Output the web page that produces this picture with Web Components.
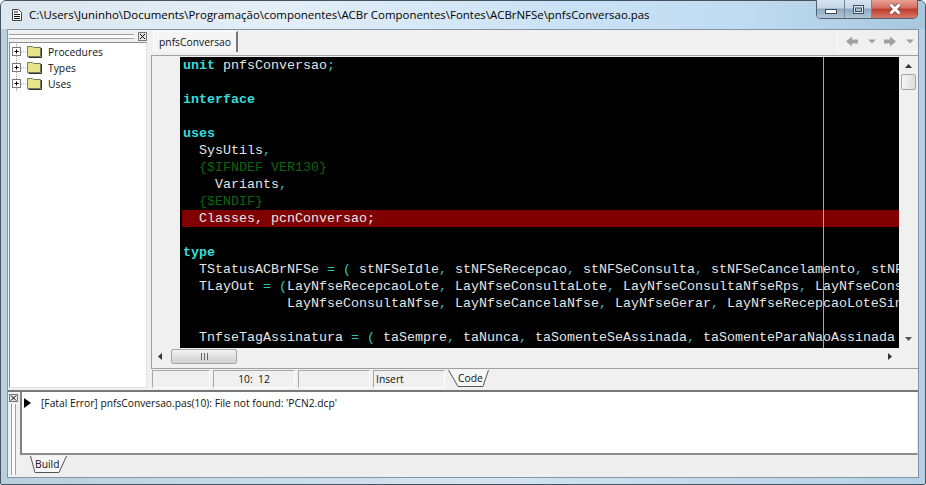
<!DOCTYPE html>
<html>
<head>
<meta charset="utf-8">
<title>pnfsConversao.pas</title>
<style>
    html, body { margin: 0; padding: 0; width: 926px; height: 485px; overflow: hidden; background: #fff; }
    body { font-family: "Open Sans", "Liberation Sans", sans-serif; }
</style>
</head>
<body>
<ide-window>
    <ide-tree slot="tree"></ide-tree>
    <ide-editor slot="editor"></ide-editor>
    <ide-messages slot="messages"></ide-messages>
</ide-window>

<script>
// frame, title bar and the docked areas
class IdeWindow extends HTMLElement {
    constructor() {
        super();
        this.attachShadow({ mode: 'open' });
        this.shadowRoot.innerHTML = `
            <style>
                :host {
                    display: flex;
                    flex-direction: column;
                    width: 926px;
                    height: 485px;
                    box-sizing: border-box;
                    padding: 0 6px 6px 6px;
                    border: 1px solid #46535f;
                    border-radius: 6px 6px 2px 2px;
                    background: linear-gradient(90deg, #b9cfdd 0, #d5e5f0 50%, #b5d1e6 100%);
                }
                .title {
                    height: 28px;
                    flex: none;
                    display: flex;
                    align-items: flex-start;
                    font-size: 11.45px;
                    color: #000;
                    margin: 0 -6px;
                    padding: 0 6px;
                    border-radius: 5px 5px 0 0;
                    background: linear-gradient(90deg, #dbe6ee 0, #e4eef6 30%, #cce3f6 58%, #bfdcf3 80%, #a8c6dc 100%);
                }
                .title svg.doc { margin: 8px 0 0 5px; flex: none; }
                .title span { margin: 6px 0 0 7px; line-height: 16px; flex: 1; white-space: nowrap; }
                .caption { display: flex; height: 19px; box-sizing: border-box; margin: -1px 1px 0 0; width: 102px; flex: none; border: 1px solid #4f6070; border-top: 0; border-radius: 0 0 5px 5px; overflow: hidden; }
                .caption div { display: flex; align-items: center; justify-content: center; box-sizing: border-box; }
                .min, .max { background: linear-gradient(180deg, #d6e4ee 0, #c3d6e4 45%, #8ea8be 50%, #afc6d8 100%); border-right: 1px solid #6f8599; }
                .min { width: 28px; align-items: flex-end !important; padding-bottom: 4px; }
                .max { width: 27px; }
                .close { flex: 1; background: linear-gradient(180deg, #e6a193 0, #d56d5e 45%, #bb3a2a 50%, #d87869 100%); }
                .client {
                    flex: 1;
                    min-height: 0;
                    display: flex;
                    flex-direction: column;
                    background: #f0f0f0;
                    border: 1px solid #8494a1;
                }
                .top { display: flex; height: 360px; flex: none; padding-left: 1px; box-sizing: border-box; }
                .split { height: 2px; flex: none; background: #777; }
                .bottom { flex: 1; min-height: 0; display: flex; padding-left: 1px; }
            </style>
            <div class="title">
                <svg class="doc" width="10" height="12" viewBox="0 0 10 12">
                    <path d="M.5.5h6l3 3v8h-9z" fill="#fff" stroke="#444"/>
                    <path d="M2 3h4M2 5.500h6M2 7.500h6M2 9.500h6" stroke="#111"/>
                </svg>
                <span>C:\\Users\\Juninho\\Documents\\Programação\\componentes\\ACBr Componentes\\Fontes\\ACBrNFSe\\pnfsConversao.pas</span>
                <div class="caption">
                    <div class="min"><svg width="12" height="5"><rect x=".5" y=".5" width="11" height="4" fill="#fff" stroke="#3d4d5c"/></svg></div>
                    <div class="max"><svg width="11" height="9"><rect x=".5" y=".5" width="10" height="8" fill="#dbe6ee" stroke="#3d4d5c"/><rect x="2.500" y="3" width="6" height="3.500" fill="#aebfcd" stroke="#3d4d5c"/></svg></div>
                    <div class="close"><svg width="14" height="12"><path d="M2.500 1.500l9 9M11.500 1.500l-9 9" stroke="#7a4a44" stroke-width="4.500"/><path d="M2.500 1.500l9 9M11.500 1.500l-9 9" stroke="#fff" stroke-width="3"/></svg></div>
                </div>
            </div>
            <div class="client">
                <div class="top">
                    <slot name="tree"></slot>
                    <slot name="editor"></slot>
                </div>
                <div class="split"></div>
                <div class="bottom"><slot name="messages"></slot></div>
            </div>
        `;
    }
}

// left code explorer
class IdeTree extends HTMLElement {
    constructor() {
        super();
        this.attachShadow({ mode: 'open' });
        const items = ['Procedures', 'Types', 'Uses'];
        const rows = items.map(name => `
            <div class="row">
                <svg width="33" height="16" viewBox="0 0 33 16">
                    <path d="M6.500 0v16M11 8h5" stroke="#999" stroke-dasharray="1 1"/>
                    <rect x="2.500" y="3.500" width="8" height="8" fill="#fff" stroke="#777"/>
                    <path d="M4.500 7.500h4M6.500 5.500v4" stroke="#000"/>
                    <path d="M17.500 5.500v-3h5l1 1h7v9h-13z" fill="#e6e488" stroke="#77775a"/>
                    <path d="M31.500 4v9.500h-13" fill="none" stroke="#333"/>
                </svg>
                <span>${name}</span>
            </div>`).join('');
        this.shadowRoot.innerHTML = `
            <style>
                :host { display: flex; flex-direction: column; width: 138px; flex: none; margin: 2px 4px 2px 0; font-size: 10.3px; }
                .head { height: 9px; flex: none; display: flex; align-items: center; gap: 4px; margin-bottom: 1px; }
                .grip { flex: 1; height: 3px; border-top: 1px solid #a0a0a0; border-bottom: 1px solid #a0a0a0; background: #fbfbfb; }
                .x { width: 9px; height: 9px; box-sizing: border-box; border: 1px solid #777; background: #e8e8e8; display: flex; }
                .list { flex: 1; background: #fff; border: 1px solid #8c8c8c; border-right-color: #e4e4e4; border-bottom-color: #e4e4e4; padding-top: 1px; }
                .row { display: flex; align-items: center; height: 16px; color: #111; }
                .row span { margin-left: 5px; }
            </style>
            <div class="head">
                <div class="grip"></div>
                <div class="x"><svg width="7" height="7"><path d="M1 1l5 5M6 1l-5 5" stroke="#000"/></svg></div>
            </div>
            <div class="list">${rows}</div>
        `;
    }
}

// tabs + code pane + status bar
class IdeEditor extends HTMLElement {
    constructor() {
        super();
        this.attachShadow({ mode: 'open' });
        const k = s => `<b class="k">${s}</b>`;
        const p = s => `<span class="p">${s}</span>`;
        const c = s => `<span class="c">${s}</span>`;
        const lines = [
            `${k('unit')} pnfsConversao${p(';')}`,
            ``,
            `${k('interface')}`,
            ``,
            `${k('uses')}`,
            `  SysUtils${p(',')}`,
            `  ${c('{$IFNDEF VER130}')}`,
            `    Variants${p(',')}`,
            `  ${c('{$ENDIF}')}`,
            `<span class="err">  Classes, pcnConversao;</span>`,
            ``,
            `${k('type')}`,
            `  TStatusACBrNFSe ${p('=')} ${p('(')} stNFSeIdle${p(',')} stNFSeRecepcao${p(',')} stNFSeConsulta${p(',')} stNFSeCancelamento${p(',')} stNF`,
            `  TLayOut ${p('=')} ${p('(')}LayNfseRecepcaoLote${p(',')} LayNfseConsultaLote${p(',')} LayNfseConsultaNfseRps${p(',')} LayNfseCons`,
            `             LayNfseConsultaNfse${p(',')} LayNfseCancelaNfse${p(',')} LayNfseGerar${p(',')} LayNfseRecepcaoLoteSin`,
            ``,
            `  TnfseTagAssinatura ${p('=')} ${p('(')} taSempre${p(',')} taNunca${p(',')} taSomenteSeAssinada${p(',')} taSomenteParaNaoAssinada`
        ];
        this.shadowRoot.innerHTML = `
            <style>
                :host { display: flex; flex-direction: column; flex: 1; min-width: 0; font-size: 10.3px; }
                .tabs { height: 25px; flex: none; display: flex; align-items: flex-start; }
                .tab { height: 21px; width: 85px; box-sizing: border-box; margin: 1px 0 0 2px; justify-content: center; background: #f5f5f5; border: 1px solid #fff; border-right: 2px solid #777; border-bottom: 0; display: flex; align-items: center; color: #111; }
                .nav { margin-left: auto; height: 22px; width: 81px; box-sizing: border-box; padding: 6px 5px 0 8px; border-left: 1px solid #fafafa; border-bottom: 1px solid #fafafa; }
                .nav svg { display: block; }
                .pane { flex: 1; min-height: 0; box-sizing: border-box; display: grid; grid-template-columns: 1fr 19px; grid-template-rows: 291px 17px; background: #f0f0f0; border-top: 1px solid #a0a0a0; border-left: 1px solid #a0a0a0; padding-top: 1px; }
                .code-wrap { display: flex; min-width: 0; min-height: 0; }
                .gutter { width: 28px; flex: none; background: #f0f0f0; }
                .code { position: relative; flex: 1; min-width: 0; overflow: hidden; background: #000; color: #e4e4e4; font: 13.33px/17px "Liberation Mono", "Courier New", monospace; white-space: pre; padding-left: 3px; }
                .line { height: 17px; }
                .k { color: #35dcdc; font-weight: bold; }
                .p { color: #2fc4c4; }
                .c { color: #0d640d; }
                .err { display: block; background: #800000; color: #e8e8e8; margin-left: -1px; padding-left: 1px; }
                .margin { position: absolute; top: 0; bottom: 0; left: 643px; width: 1px; background: #a8a8a8; }
                .vbar, .hbar { display: flex; align-items: center; }
                .vbar { flex-direction: column; }
                .thumb { background: linear-gradient(90deg, #f6f6f6, #dcdcdc); border: 1px solid #a6a6a6; border-radius: 2px; box-sizing: border-box; }
                .vbar .thumb { width: 15px; height: 16px; margin-top: 6px; }
                .vbar .up { margin-top: 7px; }
                .vbar .down { margin-top: auto; margin-bottom: 7px; }
                .hbar .left { margin-left: 6px; }
                .hbar .thumb { width: 66px; height: 15px; margin-left: 9px; background: linear-gradient(180deg, #f2f2f2, #d0d0d0); display: flex; align-items: center; justify-content: center; }
                .hbar .right { margin-left: auto; margin-right: 7px; }
                .status { height: 22px; flex: none; display: flex; align-items: stretch; padding: 1px 0 2px 1px; box-sizing: border-box; border-top: 1px solid #a0a0a0; gap: 3px; }
                .cell { border: 1px solid #a8a8a8; border-right-color: #fff; border-bottom-color: #fff; box-sizing: border-box; display: flex; align-items: center; color: #111; }
                .tabstrip { flex: 1; min-width: 0; }
            </style>
            <div class="tabs">
                <div class="tab">pnfsConversao</div>
                <div class="nav">
                    <svg width="68" height="11" viewBox="0 0 68 11" fill="#a0a0a0">
                        <path d="M0 5.500l6-5v3h6v4h-6v3z"/><path d="M22 3.500h8l-4 4z"/>
                        <path d="M50 5.500l-6-5v3h-6v4h6v3z"/><path d="M60 3.500h8l-4 4z"/>
                    </svg>
                </div>
            </div>
            <div class="pane">
                <div class="code-wrap">
                    <div class="gutter"></div>
                    <div class="code"><div class="margin"></div>${lines.map(l => `<div class="line">${l}</div>`).join('')}</div>
                </div>
                <div class="vbar">
                    <svg class="up" width="7" height="4"><path d="M0 4h7l-3.500-4z" fill="#333"/></svg>
                    <div class="thumb"></div>
                    <svg class="down" width="7" height="4"><path d="M0 0h7l-3.500 4z" fill="#555"/></svg>
                </div>
                <div class="hbar">
                    <svg class="left" width="4" height="7"><path d="M4 0v7l-4-3.500z" fill="#333"/></svg>
                    <div class="thumb"><svg width="9" height="7"><path d="M1.500 0v7M4.500 0v7M7.500 0v7" stroke="#666"/></svg></div>
                    <svg class="right" width="4" height="7"><path d="M0 0v7l4-3.500z" fill="#333"/></svg>
                </div>
                <div></div>
            </div>
            <div class="status">
                <div class="cell" style="width:58px"></div>
                <div class="cell" style="width:82px;justify-content:center">10:&nbsp; 12</div>
                <div class="cell" style="width:72px"></div>
                <div class="cell" style="width:72px;padding-left:2px">Insert</div>
                <ide-tab-strip class="tabstrip" label="Code" lean-left="10" lean-right="6"></ide-tab-strip>
            </div>
        `;
    }
}

// the little slanted tab, used under the editor and the message list
class IdeTabStrip extends HTMLElement {
    constructor() {
        super();
        this.attachShadow({ mode: 'open' });
        const label = this.getAttribute('label');
        const l = +this.getAttribute('lean-left');
        const r = +this.getAttribute('lean-right');
        this.shadowRoot.innerHTML = `
            <style>
                :host { display: flex; align-items: flex-start; font-size: 10.3px; color: #111; }
                .t { display: flex; height: 17px; flex: none; }
                svg { display: block; flex: none; }
                span { display: flex; align-items: center; background: #f6f6f6; border-bottom: 1px solid #555; box-sizing: border-box; height: 17px; }
            </style>
            <div class="t">
                <svg width="${l}" height="17"><path d="M0 0L${l} 16.500V0z" fill="#f6f6f6"/><path d="M.5 0L${l} 16.500" stroke="#555" fill="none"/></svg>
                <span>${label}</span>
                <svg width="${r}" height="17"><path d="M0 0V16.500L${r} 0z" fill="#f6f6f6"/><path d="M0 16.500L${r - .5} 0" stroke="#555" fill="none"/></svg>
            </div>
        `;
    }
}

// build messages at the bottom
class IdeMessages extends HTMLElement {
    constructor() {
        super();
        this.attachShadow({ mode: 'open' });
        this.shadowRoot.innerHTML = `
            <style>
                :host { display: flex; flex: 1; min-width: 0; font-size: 10.25px; color: #111; }
                .dock { width: 11px; flex: none; display: flex; flex-direction: column; gap: 2px; padding: 2px 0; box-sizing: border-box; }
                .x { width: 9px; height: 8px; box-sizing: border-box; border: 1px solid #777; background: #e8e8e8; display: flex; flex: none; }
                .grip { flex: 1; width: 3px; margin-left: 2px; border-left: 1px solid #a0a0a0; border-right: 1px solid #a0a0a0; background: #fbfbfb; }
                .main { flex: 1; min-width: 0; display: flex; flex-direction: column; }
                .list { flex: 1; background: #fff; box-sizing: border-box; border-left: 2px solid #808080; border-bottom: 2px solid #8c8c8c; border-right: 1px solid #e4e4e4; }
                .msg { display: flex; align-items: center; height: 16px; margin-top: 3px; }
                .msg svg { margin: 0 10px 0 2px; flex: none; }
                ide-tab-strip { height: 22px; flex: none; padding: 1px 0 0 10px; box-sizing: border-box; background: repeating-conic-gradient(#f6f6f6 0 25%, #e8e8e8 0 50%) 0 0/2px 2px; }
            </style>
            <div class="dock">
                <div class="x"><svg width="7" height="6"><path d="M1 .5l5 5M6 .5l-5 5" stroke="#000"/></svg></div>
                <div class="grip"></div>
            </div>
            <div class="main">
                <div class="list">
                    <div class="msg">
                        <svg width="7" height="10"><path d="M0 0l7 5-7 5z" fill="#000"/></svg>
                        <span>[Fatal Error] pnfsConversao.pas(10): File not found: 'PCN2.dcp'</span>
                    </div>
                </div>
                <ide-tab-strip label="Build" lean-left="5" lean-right="8"></ide-tab-strip>
            </div>
        `;
    }
}

customElements.define('ide-tab-strip', IdeTabStrip);
customElements.define('ide-tree', IdeTree);
customElements.define('ide-editor', IdeEditor);
customElements.define('ide-messages', IdeMessages);
customElements.define('ide-window', IdeWindow);
</script>
</body>
</html>
